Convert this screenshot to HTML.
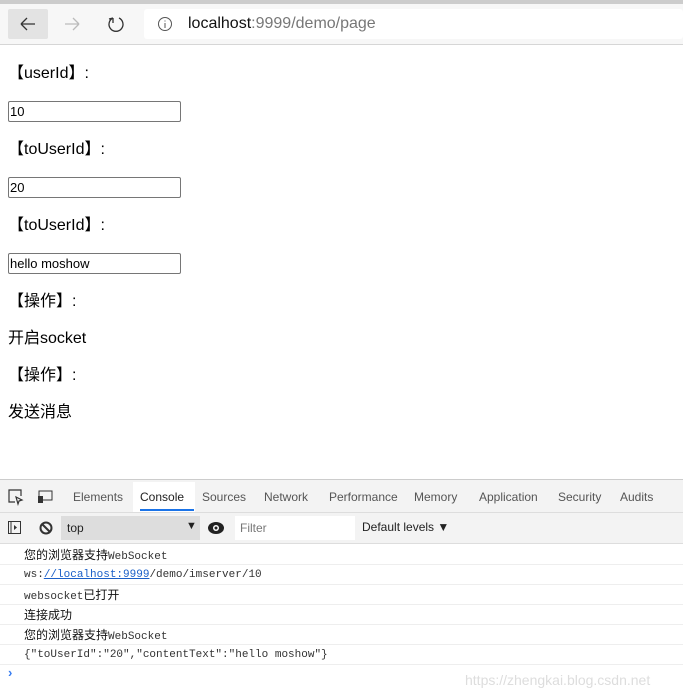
<!DOCTYPE html>
<html><head><meta charset="utf-8"><style>
*{margin:0;padding:0;box-sizing:border-box}
body{width:683px;height:698px;overflow:hidden;background:#fff;font-family:"Liberation Sans","Noto Sans CJK SC",sans-serif;position:relative}
.a{position:absolute}
.lbl{position:absolute;left:8px;font-size:16px;color:#000;line-height:20px}
.inp{position:absolute;left:8px;width:173px;height:21px;border:1px solid #767676;border-radius:2px;font-size:13px;padding:2px 1px;line-height:15px}
.tab{position:absolute;top:490px;font-size:12px;color:#555}
.cl{position:absolute;left:0;width:683px;height:20px;border-bottom:1px solid #eee;font-size:11px;line-height:20px;padding-left:24px;color:#333;font-family:"Liberation Mono","Noto Sans CJK SC",monospace}
.cl .z{font-family:"Noto Sans CJK SC",sans-serif;font-size:12px;color:#111}
</style></head><body>
<div class="a" style="left:0;top:0;width:683px;height:4px;background:#ccc"></div>
<div class="a" style="left:0;top:4px;width:683px;height:41px;background:#f7f7f7;border-bottom:1px solid #d6d6d6"></div>
<div class="a" style="left:8px;top:9px;width:40px;height:30px;background:#e3e3e3;border-radius:2px"></div>
<svg class="a" style="left:18px;top:14px" width="20" height="20"><path d="M3 10H17M3 10L9 4M3 10L9 16" stroke="#333" stroke-width="1.3" fill="none"/></svg>
<svg class="a" style="left:62px;top:14px" width="20" height="20"><path d="M3 10H17M17 10L11 4M17 10L11 16" stroke="#bbb" stroke-width="1.3" fill="none"/></svg>
<svg class="a" style="left:106px;top:14px" width="20" height="20"><path d="M7 4A7 7 0 1 0 13 4M7 4L7 9M7 4L3 5" stroke="#333" stroke-width="1.3" fill="none"/></svg>
<div class="a" style="left:144px;top:9px;width:539px;height:30px;background:#fff;border-radius:3px"></div>
<svg class="a" style="left:157px;top:16px" width="16" height="16"><circle cx="8" cy="8" r="6.5" stroke="#555" fill="none"/><path d="M8 7V12M8 4.5V5.5" stroke="#555"/></svg>
<div class="a" style="left:188px;top:15px;font-size:16px;color:#777;font-family:'Liberation Sans',sans-serif"><span style="color:#111">localhost</span>:9999/demo/page</div>

<div class="lbl" style="top:64px">【userId】:</div>
<div class="inp" style="top:101px">10</div>
<div class="lbl" style="top:140px">【toUserId】:</div>
<div class="inp" style="top:177px">20</div>
<div class="lbl" style="top:216px">【toUserId】:</div>
<div class="inp" style="top:253px">hello moshow</div>
<div class="lbl" style="top:292px">【操作】:</div>
<div class="lbl" style="top:329px">开启socket</div>
<div class="lbl" style="top:366px">【操作】:</div>
<div class="lbl" style="top:403px">发送消息</div>

<div class="a" style="left:0;top:479px;width:683px;height:34px;background:#f3f3f3;border-top:1px solid #ccc;border-bottom:1px solid #ddd"></div>
<svg class="a" style="left:7px;top:488px" width="18" height="18"><path d="M8 14H2V2H14V8M9 9L11 16L12 13L15 12Z" stroke="#333" stroke-width="1.2" fill="none"/></svg>
<svg class="a" style="left:37px;top:488px" width="18" height="18"><rect x="2" y="3" width="13" height="9" stroke="#333" fill="none"/><rect x="1" y="8" width="5" height="7" fill="#333"/></svg>
<div class="a" style="left:133px;top:482px;width:62px;height:30px;background:#fff"></div>
<div class="a" style="left:140px;top:509px;width:54px;height:2px;background:#1a73e8"></div>
<div class="tab" style="left:73px">Elements</div>
<div class="tab" style="left:140px;color:#222">Console</div>
<div class="tab" style="left:202px">Sources</div>
<div class="tab" style="left:264px">Network</div>
<div class="tab" style="left:329px">Performance</div>
<div class="tab" style="left:414px">Memory</div>
<div class="tab" style="left:479px">Application</div>
<div class="tab" style="left:558px">Security</div>
<div class="tab" style="left:620px">Audits</div>
<div class="a" style="left:0;top:513px;width:683px;height:31px;background:#f3f3f3;border-bottom:1px solid #ddd"></div>
<svg class="a" style="left:7px;top:520px" width="16" height="16"><rect x="1.5" y="1.5" width="12" height="12" stroke="#333" fill="none"/><path d="M4 2V13" stroke="#333"/><path d="M7 5L10 7.5L7 10Z" fill="#333"/></svg>
<svg class="a" style="left:38px;top:520px" width="16" height="16"><circle cx="8" cy="8" r="5.5" stroke="#333" stroke-width="2" fill="none"/><path d="M4 4L12 12" stroke="#333" stroke-width="2"/></svg>
<div class="a" style="left:61px;top:516px;width:92px;height:24px;background:#ddd;width:139px"></div>
<div class="a" style="left:67px;top:521px;font-size:12px;color:#222">top</div>
<div class="a" style="left:186px;top:520px;font-size:11px;color:#222">▼</div>
<svg class="a" style="left:207px;top:520px" width="18" height="16"><ellipse cx="9" cy="8" rx="8" ry="6" fill="#222"/><circle cx="9" cy="8" r="3" fill="#fff"/><circle cx="9" cy="8" r="1.5" fill="#222"/></svg>
<div class="a" style="left:235px;top:516px;width:120px;height:24px;background:#fff"></div>
<div class="a" style="left:240px;top:521px;font-size:12px;color:#777">Filter</div>
<div class="a" style="left:362px;top:520px;font-size:12px;color:#222">Default levels ▼</div>

<div class="cl" style="top:545px"><span class="z">您的浏览器支持</span>WebSocket</div>
<div class="cl" style="top:565px">ws:<span style="color:#1a5fc8;text-decoration:underline">//localhost:9999</span>/demo/imserver/10</div>
<div class="cl" style="top:585px">websocket<span class="z">已打开</span></div>
<div class="cl" style="top:605px"><span class="z">连接成功</span></div>
<div class="cl" style="top:625px"><span class="z">您的浏览器支持</span>WebSocket</div>
<div class="cl" style="top:645px">{"toUserId":"20","contentText":"hello moshow"}</div>
<div class="a" style="left:8px;top:665px;font-size:13px;color:#367cf1;font-weight:bold">›</div>
<div class="a" style="left:465px;top:672px;font-size:14px;color:#ddd">https://zhengkai.blog.csdn.net</div>
</body></html>
